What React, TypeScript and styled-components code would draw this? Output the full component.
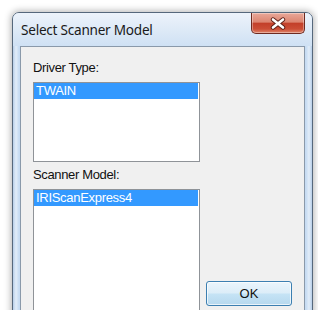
import React from 'react';
import styled, { createGlobalStyle } from 'styled-components';

const GlobalStyle = createGlobalStyle`
  html, body {
    margin: 0;
    padding: 0;
    background: #ffffff;
    overflow: hidden;
  }
`;

const Page = styled.div`
  width: 318px;
  height: 310px;
  padding: 12px 0 0 12px;
  box-sizing: border-box;
  overflow: hidden;
`;

const Window = styled.div`
  width: 301px;
  height: 330px;
  box-sizing: border-box;
  border: 1px solid #56687c;
  border-radius: 7px 7px 0 0;
  padding: 0 7px;
  background: linear-gradient(90deg, #b7cee8 0px, #e2edf9 3px, #c6dbf2 6px, #cadff4 50%, #c6dbf2 calc(100% - 6px), #e2edf9 calc(100% - 3px), #b7cee8 100%);
  box-shadow: 0 0 7px 1px rgba(0, 0, 0, 0.3);
  display: flex;
  flex-direction: column;
`;

const TitleBar = styled.div`
  height: 33px;
  display: flex;
  justify-content: space-between;
  align-items: flex-start;
  margin: 0 -7px;
  padding: 0 7px;
  border-radius: 6px 6px 0 0;
  background: linear-gradient(180deg, #edf3fb 0%, #dbe8f6 60%, #cfe1f4 100%);
`;

const Title = styled.span`
  margin: 9px 0 0 1px;
  font-family: "Noto Sans", "Open Sans", sans-serif;
  font-size: 13.6px;
  line-height: 16px;
  color: #1a1a1a;
  letter-spacing: -0.25px;
`;

const CloseButton = styled.div`
  width: 54px;
  height: 21px;
  box-sizing: border-box;
  border: 1px solid #6e2a20;
  border-top: none;
  border-radius: 0 0 5px 5px;
  background: linear-gradient(180deg, #e9a899 0%, #dc8571 45%, #c3402a 52%, #cb4e36 80%, #e0866a 100%);
  box-shadow: inset 0 0 0 1px rgba(255, 255, 255, 0.35);
  display: flex;
  align-items: center;
  justify-content: center;
`;

const Client = styled.div`
  flex: 1;
  border: 1px solid #8a99aa;
  background: #f0f0f0;
  padding: 13px 12px 0 12px;
  display: flex;
  flex-direction: column;
`;

const Label = styled.div<{ $gap?: number }>`
  font-family: "Liberation Sans", Arial, sans-serif;
  font-size: 13px;
  line-height: 16px;
  letter-spacing: -0.35px;
  color: #111;
  margin-top: ${p => p.$gap ?? 0}px;
  margin-bottom: 6px;
`;

const ListBox = styled.div<{ $height: number }>`
  width: 167px;
  height: ${p => p.$height}px;
  box-sizing: border-box;
  border: 1px solid #8f9398;
  background: #ffffff;
  flex-shrink: 0;
`;

const Item = styled.div<{ $selected?: boolean }>`
  height: 16px;
  margin-right: 1px;
  padding-left: 2px;
  font-family: "Liberation Sans", Arial, sans-serif;
  font-size: 13px;
  line-height: 16px;
  letter-spacing: -0.3px;
  color: ${p => (p.$selected ? '#ffffff' : '#111')};
  background: ${p => (p.$selected ? '#3399ff' : 'transparent')};
`;

const ModelRow = styled.div`
  display: flex;
  align-items: flex-end;
  gap: 6px;
`;

const OkButton = styled.button`
  width: 86px;
  height: 25px;
  margin-bottom: 13px;
  box-sizing: border-box;
  border: 1px solid #3c7fb1;
  border-radius: 3px;
  background: linear-gradient(180deg, #eaf5fc 0%, #dcedf8 48%, #c5e3f5 52%, #b6d8ee 100%);
  box-shadow: inset 0 0 0 1px rgba(255, 255, 255, 0.7);
  font-family: "Liberation Sans", Arial, sans-serif;
  font-size: 13px;
  color: #111;
  padding: 0;
`;

const CloseIcon = () => (
  <svg width="18" height="13" viewBox="0 0 18 13">
    <path d="M4 2.5 L14 10.5 M14 2.5 L4 10.5" stroke="#5a1e16" strokeWidth="4.4" strokeLinecap="round" />
    <path d="M4 2.5 L14 10.5 M14 2.5 L4 10.5" stroke="#ffffff" strokeWidth="2.6" strokeLinecap="round" />
  </svg>
);

const App = () => {
  return (
    <Page>
      <GlobalStyle />
      <Window>
        <TitleBar>
          <Title>Select Scanner Model</Title>
          <CloseButton><CloseIcon /></CloseButton>
        </TitleBar>
        <Client>
          <Label>Driver Type:</Label>
          <ListBox $height={80}>
            <Item $selected>TWAIN</Item>
          </ListBox>
          <Label $gap={5}>Scanner Model:</Label>
          <ModelRow>
            <ListBox $height={130}>
              <Item $selected>IRIScanExpress4</Item>
            </ListBox>
            <OkButton>OK</OkButton>
          </ModelRow>
        </Client>
      </Window>
    </Page>
  );
};

export default App;
